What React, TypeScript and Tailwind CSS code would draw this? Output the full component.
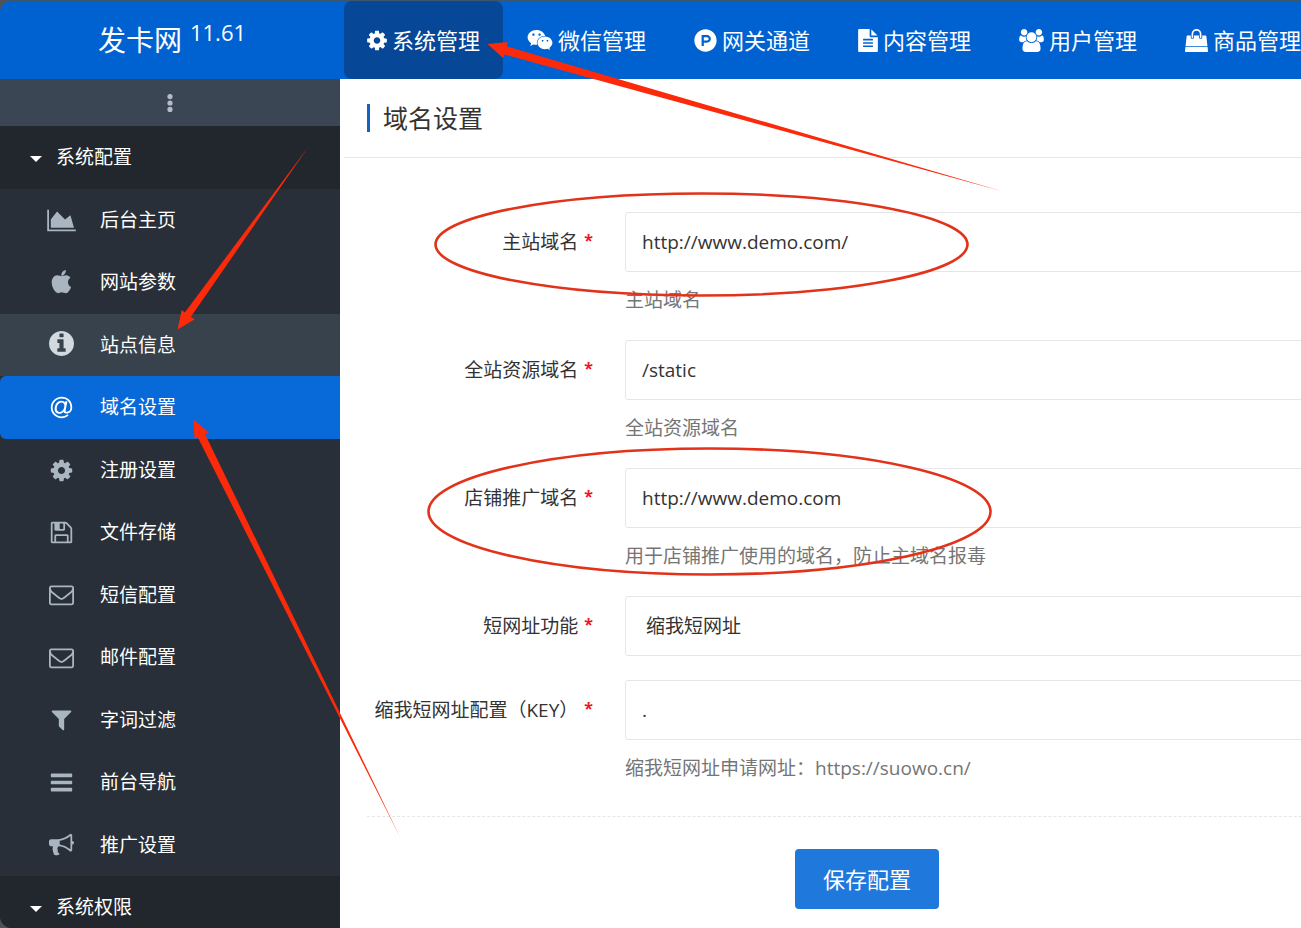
import { useState } from "react";
import { FaProductHunt, FaWeixin } from "react-icons/fa";

type IconShape = { box: string; d: string };

const COG: IconShape = {
  box: "128 0 1536 1792",
  d: "M1152 896q0-106-75-181t-181-75-181 75-75 181 75 181 181 75 181-75 75-181zm512-109v222q0 12-8 23t-20 13l-185 28q-19 54-39 91 35 50 107 138 10 12 10 25t-9 23q-27 37-99 108t-94 71q-12 0-26-9l-138-108q-44 23-91 38-16 136-29 186-7 28-36 28h-222q-14 0-24.5-8.5t-11.5-21.5l-28-184q-49-16-90-37l-141 107q-10 9-25 9-14 0-25-11-126-114-165-168-7-10-7-23 0-12 8-23 15-21 51-66.5t54-70.5q-27-50-41-99l-183-27q-13-2-21-12.5t-8-23.5v-222q0-12 8-23t19-13l186-28q14-46 39-92-40-57-107-138-10-12-10-24 0-10 9-23 26-36 98.5-107.5t94.5-71.5q13 0 26 10l138 107q44-23 91-38 16-136 29-186 7-28 36-28h222q14 0 24.5 8.5t11.5 21.5l28 184q49 16 90 37l142-107q9-9 24-9 13 0 25 10 129 119 165 170 7 8 7 22 0 12-8 23-15 21-51 66.5t-54 70.5q26 50 41 98l183 28q13 2 21 12.5t8 23.5z",
};

const FILE_TEXT: IconShape = {
  box: "128 0 1536 1792",
  d: "M1596 476q14 14 28 36h-472v-472q22 14 36 28zm-476 164h544v1056q0 40-28 68t-68 28h-1344q-40 0-68-28t-28-68v-1600q0-40 28-68t68-28h800v544q0 40 28 68t68 28zm160 736v-64q0-14-9-23t-23-9h-704q-14 0-23 9t-9 23v64q0 14 9 23t23 9h704q14 0 23-9t9-23zm0-256v-64q0-14-9-23t-23-9h-704q-14 0-23 9t-9 23v64q0 14 9 23t23 9h704q14 0 23-9t9-23zm0-256v-64q0-14-9-23t-23-9h-704q-14 0-23 9t-9 23v64q0 14 9 23t23 9h704q14 0 23-9t9-23z",
};

const USERS: IconShape = {
  box: "0 0 1920 1792",
  d: "M593 896q-162 5-265 128h-134q-82 0-138-40.5t-56-118.5q0-353 124-353 6 0 43.5 21t97.5 42.5 119 21.5q67 0 133-23-5 37-5 66 0 139 81 256zm1071 637q0 120-73 189.5t-194 69.5h-874q-121 0-194-69.5t-73-189.5q0-53 3.5-103.5t14-109 26.5-108.5 43-97.5 62-81 85.5-53.5 111.5-20q10 0 43 21.5t73 48 107 48 135 21.5 135-21.5 107-48 73-48 43-21.5q61 0 111.5 20t85.5 53.5 62 81 43 97.5 26.5 108.5 14 109 3.5 103.5zm-1024-1277q0 106-75 181t-181 75-181-75-75-181 75-181 181-75 181 75 75 181zm704 384q0 159-112.5 271.5t-271.5 112.5-271.5-112.5-112.5-271.5 112.5-271.5 271.5-112.5 271.5 112.5 112.5 271.5zm576 225q0 78-56 118.5t-138 40.5h-134q-103-123-265-128 81-117 81-256 0-29-5-66 66 23 133 23 59 0 119-21.5t97.5-42.5 43.5-21q124 0 124 353zm-128-609q0 106-75 181t-181 75-181-75-75-181 75-181 181-75 181 75 75 181z",
};

const BAG: IconShape = {
  box: "0 0 1792 1792",
  d: "M1757 1408l35 313q3 28-16 50-19 21-48 21h-1664q-29 0-48-21-19-22-16-50l35-313h1722zm-93-839l86 775h-1708l86-775q3-24 21-40.5t43-16.5h256v128q0 53 37.5 90.5t90.5 37.5 90.5-37.5 37.5-90.5v-128h384v128q0 53 37.5 90.5t90.5 37.5 90.5-37.5 37.5-90.5v-128h256q25 0 43 16.5t21 40.5zm-384-185v256q0 26-19 45t-45 19-45-19-19-45v-256q0-106-75-181t-181-75-181 75-75 181v256q0 26-19 45t-45 19-45-19-19-45v-256q0-159 112.5-271.5t271.5-112.5 271.5 112.5 112.5 271.5z",
};

const CHART: IconShape = {
  box: "0 0 2048 1792",
  d: "M2048 1536v128h-2048v-1536h128v1408h1920zm-384-1024l256 896h-1664v-576l448-576 576 576z",
};

const APPLE: IconShape = {
  box: "0 0 1792 1792",
  d: "M1585 1215q-39 125-123 250-129 196-257 196-49 0-140-32-86-32-151-32-61 0-142 33-81 34-132 34-152 0-301-259-147-261-147-503 0-228 113-374 113-144 284-144 72 0 177 30 104 30 138 30 45 0 143-34 102-34 173-34 119 0 213 65 52 36 104 100-79 67-114 118-65 94-65 207 0 124 69 223t158 126zm-376-1173q0 61-29 136-30 75-93 138-54 54-108 72-37 11-104 17 3-149 78-257 74-107 250-148 1 3 2.5 11t2.5 11q0 4 .5 10t.5 10z",
};

const INFO: IconShape = {
  box: "128 128 1536 1536",
  d: "M1152 1376v-160q0-14-9-23t-23-9h-96v-512q0-14-9-23t-23-9h-320q-14 0-23 9t-9 23v160q0 14 9 23t23 9h96v320h-96q-14 0-23 9t-9 23v160q0 14 9 23t23 9h448q14 0 23-9t9-23zm-128-896v-160q0-14-9-23t-23-9h-192q-14 0-23 9t-9 23v160q0 14 9 23t23 9h192q14 0 23-9t9-23zm640 416q0 209-103 385.5t-279.5 279.5-385.5 103-385.5-103-279.5-279.5-103-385.5 103-385.5 279.5-279.5 385.5-103 385.5 103 279.5 279.5 103 385.5z",
};

const AT: IconShape = {
  box: "0 0 1792 1792",
  d: "M1100 775q0-108-53.5-169t-147.5-61q-63 0-124 30.5t-110 84.5-79.5 137-30.5 180q0 112 53.5 173t150.5 61q96 0 176-66.5t122.5-166 42.5-203.5zm564 121q0 111-37 197t-98.5 135-131.5 74.5-145 27.5q-6 0-15.5.5t-16.5.5q-95 0-142-53-28-33-33-83-52 66-131.5 110t-173.5 44q-161 0-249.5-95.5t-88.5-269.5q0-157 66-290t179-210.5 246-77.5q87 0 155 35.5t106 99.5l2-19 11-56q1-6 5.5-12t9.5-6h118q5 0 13 11 5 5 3 16l-120 614q-5 24-5 48 0 39 12.5 52t44.5 13q28-1 57-5.5t73-24 77-50 57-89.5 24-137q0-292-174-466t-466-174q-130 0-248.5 51t-204 136.5-136.5 204-51 248.5 51 248.5 136.5 204 204 136.5 248.5 51q228 0 405-144 11-9 24-8t21 12l41 49q8 12 7 24-2 13-12 22-102 83-227.5 128t-258.5 45q-156 0-298-61t-245-164-164-245-61-298 61-298 164-245 245-164 298-61q344 0 556 212t212 556z",
};

const FLOPPY: IconShape = {
  box: "0 0 1792 1792",
  d: "M512 1536h768v-384h-768v384zm896 0h128v-896q0-14-10-38.5t-20-34.5l-281-281q-10-10-34-20t-39-10v416q0 40-28 68t-68 28h-576q-40 0-68-28t-28-68v-416h-128v1280h128v-416q0-40 28-68t68-28h832q40 0 68 28t28 68v416zm-384-928v-320q0-13-9.5-22.5t-22.5-9.5h-192q-13 0-22.5 9.5t-9.5 22.5v320q0 13 9.5 22.5t22.5 9.5h192q13 0 22.5-9.5t9.5-22.5zm640 32v928q0 40-28 68t-68 28h-1344q-40 0-68-28t-28-68v-1344q0-40 28-68t68-28h928q40 0 88 20t76 48l280 280q28 28 48 76t20 88z",
};

const ENVELOPE: IconShape = {
  box: "0 0 1792 1792",
  d: "M1664 1504v-768q-32 36-69 66-268 206-426 338-51 43-83 67t-86.5 48.5-102.5 24.5h-2q-48 0-102.5-24.5t-86.5-48.5-83-67q-158-132-426-338-37-30-69-66v768q0 13 9.5 22.5t22.5 9.5h1472q13 0 22.5-9.5t9.5-22.5zm0-1051v-24.5l-.5-13-3-12.5-5.5-9-9-7.5-14-2.5h-1472q-13 0-22.5 9.5t-9.5 22.5q0 168 147 284 193 152 401 317 6 5 35 29.5t46 37.5 44.5 31.5 50.5 27.5 43 9h2q20 0 43-9t50.5-27.5 44.5-31.5 46-37.5 35-29.5q208-165 401-317 54-43 100.5-115.5t46.5-131.5zm128-37v1088q0 66-47 113t-113 47h-1472q-66 0-113-47t-47-113v-1088q0-66 47-113t113-47h1472q66 0 113 47t47 113z",
};

const FILTER: IconShape = {
  box: "0 0 1792 1792",
  d: "M1595 295q17 41-14 70l-493 493v742q0 42-39 59-13 5-25 5-27 0-45-19l-256-256q-19-19-19-45v-486l-493-493q-31-29-14-70 17-39 59-39h1280q42 0 59 39z",
};

const BARS: IconShape = {
  box: "0 0 1792 1792",
  d: "M1664 1344v128q0 26-19 45t-45 19h-1408q-26 0-45-19t-19-45v-128q0-26 19-45t45-19h1408q26 0 45 19t19 45zm0-512v128q0 26-19 45t-45 19h-1408q-26 0-45-19t-19-45v-128q0-26 19-45t45-19h1408q26 0 45 19t19 45zm0-512v128q0 26-19 45t-45 19h-1408q-26 0-45-19t-19-45v-128q0-26 19-45t45-19h1408q26 0 45 19t19 45z",
};

const BULLHORN: IconShape = {
  box: "0 0 1792 1792",
  d: "M1664 640q53 0 90.5 37.5t37.5 90.5-37.5 90.5-90.5 37.5v384q0 52-38 90t-90 38q-417-347-812-380-58 19-91 66t-31 100.5 40 92.5q-20 33-23 65.5t6 58 33.5 55 48 50 61.5 50.5q-29 58-111.5 83t-168.5 11.5-132-55.5q-7-23-29.5-87.5t-32-94.5-23-89-15-101 3.5-98.5 22-110.5h-122q-66 0-113-47t-47-113v-192q0-66 47-113t113-47h480q435 0 896-384 52 0 90 38t38 90v384zm-128 604v-954q-394 302-768 343v270q377 42 768 341z",
};

function Icon({ shape, className }: { shape: IconShape; className: string }) {
  return (
    <svg viewBox={shape.box} className={className} fill="currentColor" aria-hidden="true">
      <path d={shape.d} />
    </svg>
  );
}

const NAV = [
  { label: "系统管理", icon: <Icon shape={COG} className="h-[23px] w-5" /> },
  { label: "微信管理", icon: <FaWeixin className="size-[26px]" /> },
  { label: "网关通道", icon: <FaProductHunt className="size-[23px]" /> },
  { label: "内容管理", icon: <Icon shape={FILE_TEXT} className="h-[23px] w-5" /> },
  { label: "用户管理", icon: <Icon shape={USERS} className="h-[23px] w-[25px]" /> },
  { label: "商品管理", icon: <Icon shape={BAG} className="size-[23px]" /> },
];

const MENU = [
  { label: "后台主页", shape: CHART },
  { label: "网站参数", shape: APPLE },
  { label: "站点信息", shape: INFO },
  { label: "域名设置", shape: AT },
  { label: "注册设置", shape: COG },
  { label: "文件存储", shape: FLOPPY },
  { label: "短信配置", shape: ENVELOPE },
  { label: "邮件配置", shape: ENVELOPE },
  { label: "字词过滤", shape: FILTER },
  { label: "前台导航", shape: BARS },
  { label: "推广设置", shape: BULLHORN },
];

type Field = {
  id: string;
  label: string;
  value: string;
  hint?: string;
  options?: string[];
};

const FIELDS: Field[] = [
  { id: "site", label: "主站域名", value: "http://www.demo.com/", hint: "主站域名" },
  { id: "static", label: "全站资源域名", value: "/static", hint: "全站资源域名" },
  {
    id: "shop",
    label: "店铺推广域名",
    value: "http://www.demo.com",
    hint: "用于店铺推广使用的域名，防止主域名报毒",
  },
  { id: "short", label: "短网址功能", value: "缩我短网址", options: ["缩我短网址"] },
  {
    id: "key",
    label: "缩我短网址配置（KEY）",
    value: ".",
    hint: "缩我短网址申请网址：https://suowo.cn/",
  },
];

function GroupTitle({ label }: { label: string }) {
  return (
    <button
      type="button"
      className="flex h-[63px] w-full shrink-0 items-center gap-3.5 bg-[#22272e] pl-[30px] text-[19px] text-white"
    >
      <svg viewBox="0 0 12 6" className="mt-0.5 h-1.5 w-3" fill="currentColor" aria-hidden="true">
        <path d="M0 0h12L6 6z" />
      </svg>
      {label}
    </button>
  );
}

function Sidebar() {
  const [current, setCurrent] = useState("域名设置");

  return (
    <aside className="flex w-[340px] shrink-0 flex-col overflow-hidden bg-[#282f38]">
      <button
        type="button"
        aria-label="菜单"
        className="flex h-[47px] w-full shrink-0 items-center justify-center bg-[#3b4654] text-[#b4bcc5]"
      >
        <svg viewBox="0 0 6 18" className="h-[18px] w-1.5" fill="currentColor" aria-hidden="true">
          <circle cx="3" cy="2.6" r="2.6" />
          <circle cx="3" cy="9" r="2.6" />
          <circle cx="3" cy="15.4" r="2.6" />
        </svg>
      </button>
      <GroupTitle label="系统配置" />
      <ul className="grid min-h-[687px] shrink-0 auto-rows-fr">
        {MENU.map((m) => {
          // 站点信息 is drawn in its hover state
          const state =
            m.label === current
              ? "rounded-l-md bg-[#0869d9] text-white"
              : m.label === "站点信息"
                ? "bg-[#37424d] text-[#d3dadf]"
                : "text-[#a9b5c0]";
          return (
            <li key={m.label} className="flex">
              <a
                href="#"
                onClick={() => setCurrent(m.label)}
                className={`flex flex-1 items-center gap-5 pl-[43px] ${state}`}
              >
                <span className={`flex w-[37px] justify-center ${m.shape === INFO ? "pb-1" : ""}`}>
                  <Icon
                    shape={m.shape}
                    className={m.shape === CHART ? "h-[25px] w-[29px]" : "size-[25px]"}
                  />
                </span>
                <span className="text-[19px] text-white">{m.label}</span>
              </a>
            </li>
          );
        })}
      </ul>
      <GroupTitle label="系统权限" />
    </aside>
  );
}

function FieldRow({ field }: { field: Field }) {
  const box =
    "block h-[60px] w-full rounded-[3px] border border-[#e6e6e6] bg-white text-[#333] outline-none focus:border-[#c9c9c9]";
  return (
    <div className="flex gap-8">
      <label htmlFor={field.id} className="flex h-[60px] w-[226px] shrink-0 items-center justify-end gap-1.5">
        {field.label}
        <span className="mb-1 font-['Noto_Sans',sans-serif] text-base font-bold text-[#f0141e]">*</span>
      </label>
      <div className="flex-1">
        {field.options ? (
          <select id={field.id} defaultValue={field.value} className={`${box} appearance-none pl-5`}>
            {field.options.map((o) => (
              <option key={o}>{o}</option>
            ))}
          </select>
        ) : (
          <input id={field.id} type="text" defaultValue={field.value} className={`${box} px-4`} />
        )}
        {field.hint && <p className="mt-3 leading-8 text-[#757575]">{field.hint}</p>}
      </div>
    </div>
  );
}

// Red pen marks lying over the whole page
function Marks() {
  return (
    <svg
      className="pointer-events-none absolute top-0 left-0"
      width="1301"
      height="928"
      viewBox="0 0 1301 928"
      aria-hidden="true"
    >
      <g fill="none" stroke="#e2321a" strokeWidth="2.6">
        <ellipse cx="701.5" cy="244.5" rx="266" ry="51" />
        <ellipse cx="709.5" cy="511.5" rx="281" ry="63" />
      </g>
      <g fill="#fb2a0a">
        <path d="M487.5 44L508 42L507 46.500L1003 191.500L504.500 54.500L503 58z" />
        <path d="M177.500 329.500L181.700 310L184.800 312.500L309 146L190.800 317L194.700 319.300z" />
        <path d="M193.300 419.500L208.700 432.300L205 434L400 837L197.700 437.300L194.500 438.700z" />
      </g>
    </svg>
  );
}

export default function App() {
  return (
    <div className="relative h-screen overflow-hidden bg-[#4d5358] font-['Open_Sans','Noto_Sans_CJK_SC',sans-serif]">
      <div className="flex h-full flex-col overflow-hidden rounded-l-xl border-t border-[#3d5670]">
        <header className="flex h-[78px] shrink-0 bg-[#0062d0] text-white">
          <div className="flex w-[344px] shrink-0 items-center justify-center gap-2">
            <span className="text-[28px]">发卡网</span>
            <span className="mb-4 text-[22px]">11.61</span>
          </div>
          <nav className="flex">
            {NAV.map((n, i) => (
              <a
                key={n.label}
                href="#"
                className={`flex shrink-0 items-center gap-[5px] text-[22px] whitespace-nowrap ${
                  i === 0 ? "rounded-lg bg-[#064798] px-[23px]" : "px-6"
                }`}
              >
                {n.icon}
                {n.label}
              </a>
            ))}
          </nav>
        </header>

        <div className="flex min-h-0 flex-1">
          <Sidebar />
          <main className="min-w-0 flex-1 overflow-hidden bg-white pl-1 text-[19px] text-[#333]">
            <div className="flex h-[79px] items-center border-b border-[#e6e6e6] pl-[23px]">
              <h1 className="border-l-3 border-[#1263c4] pl-[13px] text-[25px] leading-7">域名设置</h1>
            </div>
            {/* the form is wider than the pane and runs out of view on the right */}
            <form className="-mr-[66px] pt-[54px] pl-[23px]" onSubmit={(e) => e.preventDefault()}>
              <div className="flex flex-col gap-6">
                {FIELDS.map((f) => (
                  <FieldRow key={f.id} field={f} />
                ))}
              </div>
              <div className="mt-8 flex justify-center border-t border-dashed border-[#e6e6e6] pt-8">
                <button
                  type="submit"
                  className="h-[60px] rounded bg-[#1f79dd] px-7 text-[22px] text-white hover:bg-[#1a6cc8]"
                >
                  保存配置
                </button>
              </div>
            </form>
          </main>
        </div>
      </div>
      <Marks />
    </div>
  );
}
